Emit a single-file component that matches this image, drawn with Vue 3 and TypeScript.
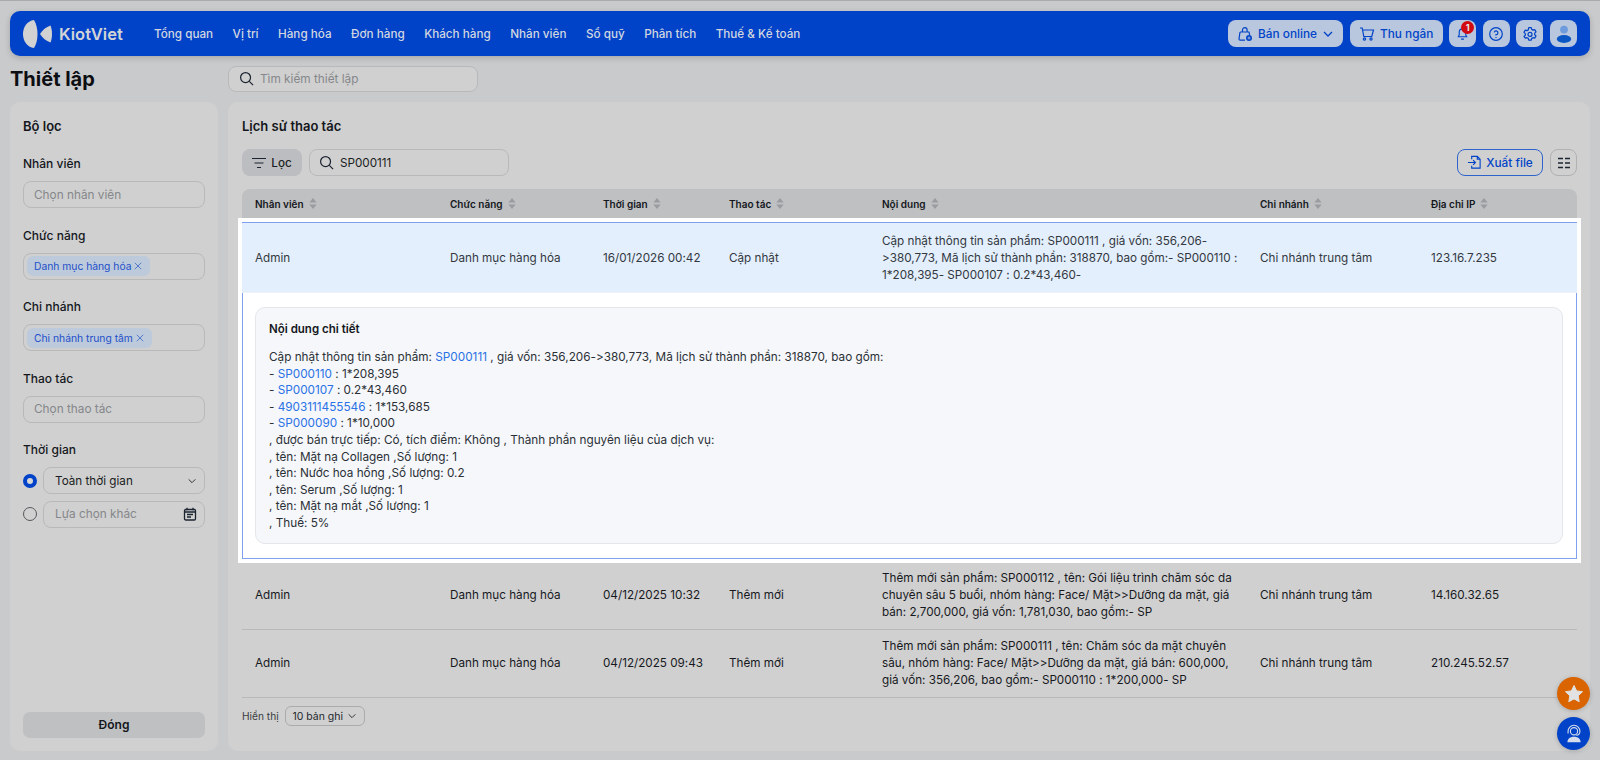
<script setup lang="ts">
const nav: string[] = ['Tổng quan', 'Vị trí', 'Hàng hóa', 'Đơn hàng', 'Khách hàng', 'Nhân viên', 'Sổ quỹ', 'Phân tích', 'Thuế & Kế toán']
const cols: string[] = ['Nhân viên', 'Chức năng', 'Thời gian', 'Thao tác', 'Nội dung', 'Chi nhánh', 'Địa chỉ IP']
const others = [
  { time: '04/12/2025 10:32', content: 'Thêm mới sản phẩm: SP000112 , tên: Gói liệu trình chăm sóc da chuyên sâu 5 buổi, nhóm hàng: Face/ Mặt>>Dưỡng da mặt, giá bán: 2,700,000, giá vốn: 1,781,030, bao gồm:- SP', ip: '14.160.32.65' },
  { time: '04/12/2025 09:43', content: 'Thêm mới sản phẩm: SP000111 , tên: Chăm sóc da mặt chuyên sâu, nhóm hàng: Face/ Mặt>>Dưỡng da mặt, giá bán: 600,000, giá vốn: 356,206, bao gồm:- SP000110 : 1*200,000- SP', ip: '210.245.52.57' },
]
const parts = [
  { code: 'SP000110', value: ' : 1*208,395' },
  { code: 'SP000107', value: ' : 0.2*43,460' },
  { code: '4903111455546', value: ' : 1*153,685' },
  { code: 'SP000090', value: ' : 1*10,000' },
]
const tail: string[] = [
  ', được bán trực tiếp: Có, tích điểm: Không , Thành phần nguyên liệu của dịch vụ:',
  ', tên: Mặt nạ Collagen ,Số lượng: 1',
  ', tên: Nước hoa hồng ,Số lượng: 0.2',
  ', tên: Serum ,Số lượng: 1',
  ', tên: Mặt nạ mắt ,Số lượng: 1',
  ', Thuế: 5%',
]
</script>

<template>
  <div class="page">
    <header class="topbar">
      <div class="brand">
        <svg class="logo" viewBox="0 0 30 28" width="30" height="28">
          <path d="M11 0C4 1 0 7 0 14s4 13 11 14c2.500-4 3.500-9 3.500-14S13.500 4 11 0z" fill="#d2d2d2" />
          <path d="M27.500 5.500C23 7 19.500 10 17 14c2.500 4 6 7 10.500 8.500 1-2.500 1.500-5.500 1.500-8.500s-.5-6-1.500-8.500z" fill="#d2d2d2" />
        </svg>
        <span class="brand-name">KiotViet</span>
      </div>
      <nav class="nav">
        <span v-for="n in nav" :key="n">{{ n }}</span>
      </nav>
      <div class="actions">
        <button class="act wide-a">
          <svg viewBox="0 0 16 16" width="16" height="16" fill="none" stroke="#0043c8" stroke-width="1.200">
            <path d="M3 6h9l.6 3M3 6 2 13c0 .8.500 1.200 1.200 1.200H8M5.500 6V4a2.300 2.300 0 0 1 4.600 0v2" />
            <circle cx="12" cy="12" r="3" fill="#0043c8" stroke="none" />
            <path d="M10.500 12h3M12 10.500v3" stroke="#b8c7dd" stroke-width=".8" />
          </svg>
          Bán online
          <svg viewBox="0 0 12 12" width="12" height="12" fill="none" stroke="#0043c8" stroke-width="1.300"><path d="m2 4 4 4 4-4" /></svg>
        </button>
        <button class="act wide-b">
          <svg viewBox="0 0 16 16" width="16" height="16" fill="none" stroke="#0043c8" stroke-width="1.200">
            <path d="M1 2h2.200l1.600 8.500h8L14.500 4H3.600" />
            <circle cx="5.500" cy="13" r="1.100" />
            <circle cx="12" cy="13" r="1.100" />
          </svg>
          Thu ngân
        </button>
        <button class="act square bell">
          <svg viewBox="0 0 16 16" width="15" height="15" fill="none" stroke="#0043c8" stroke-width="1.200">
            <path d="M3.500 11.500h9l-1-2V6.500a3.500 3.500 0 0 0-7 0v3zM6.500 14h3" />
          </svg>
          <span class="badge">1</span>
        </button>
        <button class="act square">
          <svg viewBox="0 0 16 16" width="16" height="16" fill="none" stroke="#0043c8" stroke-width="1.200">
            <circle cx="8" cy="8" r="6.300" />
            <path d="M6.200 6.300A1.900 1.900 0 1 1 8 8.700v.9M8 11.100v.8" />
          </svg>
        </button>
        <button class="act square">
          <svg viewBox="0 0 16 16" width="16" height="16" fill="none" stroke="#0043c8" stroke-width="1.200">
            <path d="M6.700 1.700h2.600l.4 1.700 1.300.7 1.700-.5 1.300 2.300-1.300 1.200v1.600l1.300 1.200-1.300 2.300-1.700-.5-1.300.7-.4 1.700H6.700l-.4-1.700-1.300-.7-1.700.5L2 10.400l1.300-1.200V7.600L2 6.400l1.300-2.300 1.700.5 1.300-.7z" stroke-linejoin="round" />
            <circle cx="8" cy="8.400" r="2" />
          </svg>
        </button>
        <button class="act square">
          <svg viewBox="0 0 18 18" width="20" height="20">
            <circle cx="9" cy="5" r="3.500" fill="#6d9bdc" />
            <ellipse cx="9" cy="13.500" rx="6.500" ry="3.500" fill="#0a56c4" />
          </svg>
        </button>
      </div>
    </header>

    <div class="title-row">
      <h1>Thiết lập</h1>
      <div class="field search-top">
        <svg class="mag" viewBox="0 0 16 16" width="15" height="15" fill="none" stroke="#1b2430" stroke-width="1.300"><circle cx="7" cy="7" r="5.300" /><path d="m11 11 4 4" /></svg>
        <span class="ph">Tìm kiếm thiết lập</span>
      </div>
    </div>

    <div class="body">
      <aside class="side">
        <h2>Bộ lọc</h2>
        <div class="group">
          <label>Nhân viên</label>
          <div class="field pad"><span class="ph">Chọn nhân viên</span></div>
        </div>
        <div class="group">
          <label>Chức năng</label>
          <div class="field tags">
            <span class="tag">Danh mục hàng hóa <svg viewBox="0 0 10 10" width="8" height="8" fill="none" stroke="#3a64c8" stroke-width="1"><path d="m1 1 8 8M9 1 1 9" /></svg></span>
          </div>
        </div>
        <div class="group">
          <label>Chi nhánh</label>
          <div class="field tags">
            <span class="tag">Chi nhánh trung tâm <svg viewBox="0 0 10 10" width="8" height="8" fill="none" stroke="#3a64c8" stroke-width="1"><path d="m1 1 8 8M9 1 1 9" /></svg></span>
          </div>
        </div>
        <div class="group">
          <label>Thao tác</label>
          <div class="field pad"><span class="ph">Chọn thao tác</span></div>
        </div>
        <div class="group last">
          <label>Thời gian</label>
          <div class="radio-row">
            <span class="radio on"></span>
            <div class="field pad2 between">
              <span class="val">Toàn thời gian</span>
              <svg viewBox="0 0 12 12" width="10" height="10" fill="none" stroke="#333" stroke-width="1.200"><path d="m2 4 4 4 4-4" /></svg>
            </div>
          </div>
          <div class="radio-row">
            <span class="radio"></span>
            <div class="field pad2 between">
              <span class="ph">Lựa chọn khác</span>
              <svg viewBox="0 0 14 14" width="14" height="14" fill="none" stroke="#1b2430" stroke-width="1.300">
                <rect x="1.500" y="2.500" width="11" height="10.500" rx="1.200" />
                <path d="M4 .8v2.500M10 .8v2.500M1.500 5h11M4 7.500h6M4 10h4" />
              </svg>
            </div>
          </div>
        </div>
        <button class="close">Đóng</button>
      </aside>

      <main class="main">
        <h2>Lịch sử thao tác</h2>
        <div class="toolbar">
          <button class="filter">
            <svg viewBox="0 0 14 14" width="14" height="14" fill="none" stroke="#1b2430" stroke-width="1.200"><path d="M0 2.500h14M2.500 7h9M5 11.500h4" /></svg>
            Lọc
          </button>
          <div class="field search-main">
            <svg class="mag" viewBox="0 0 16 16" width="15" height="15" fill="none" stroke="#1b2430" stroke-width="1.300"><circle cx="7" cy="7" r="5.300" /><path d="m11 11 4 4" /></svg>
            <span class="val">SP000111</span>
          </div>
          <div class="spacer"></div>
          <button class="export">
            <svg viewBox="0 0 16 16" width="15" height="15" fill="none" stroke="#0043c8" stroke-width="1.200">
              <path d="M5 4.500V1.500h6l3 3V14H5v-2.500M11 1.500v3h3M1 8h8M6.500 5.500 9 8l-2.500 2.500" />
            </svg>
            Xuất file
          </button>
          <button class="grid-btn">
            <svg viewBox="0 0 14 14" width="14" height="14" fill="none" stroke="#1b2430" stroke-width="1.300"><path d="M1 2.500h5M8 2.500h5M1 7h5M8 7h5M1 11.500h5M8 11.500h5" /></svg>
          </button>
        </div>

        <div class="thead grid">
          <div v-for="c in cols" :key="c" class="th">
            {{ c }}
            <svg viewBox="0 0 8 12" width="8" height="11" fill="#9a9c9f"><path d="M4 0 8 5H0zM4 12 0 7h8z" /></svg>
          </div>
        </div>

        <section class="focus">
          <div class="grid row-blue">
            <div>Admin</div>
            <div>Danh mục hàng hóa</div>
            <div class="nowrap">16/01/2026 00:42</div>
            <div>Cập nhật</div>
            <div class="content">Cập nhật thông tin sản phẩm: SP000111 , giá vốn: 356,206-&gt;380,773, Mã lịch sử thành phần: 318870, bao gồm:- SP000110 : 1*208,395- SP000107 : 0.2*43,460-</div>
            <div>Chi nhánh trung tâm</div>
            <div>123.16.7.235</div>
          </div>
          <div class="detail-wrap">
            <div class="detail">
              <h3>Nội dung chi tiết</h3>
              <p>Cập nhật thông tin sản phẩm: <a>SP000111</a> , giá vốn: 356,206-&gt;380,773, Mã lịch sử thành phần: 318870, bao gồm:</p>
              <p v-for="p in parts" :key="p.code">- <a>{{ p.code }}</a>{{ p.value }}</p>
              <p v-for="t in tail" :key="t">{{ t }}</p>
            </div>
          </div>
        </section>

        <div v-for="o in others" :key="o.time" class="grid row">
          <div>Admin</div>
          <div>Danh mục hàng hóa</div>
          <div class="nowrap">{{ o.time }}</div>
          <div>Thêm mới</div>
          <div class="content">{{ o.content }}</div>
          <div>Chi nhánh trung tâm</div>
          <div>{{ o.ip }}</div>
        </div>

        <div class="footer">
          <span class="show">Hiển thị</span>
          <div class="page-size">
            10 bản ghi
            <svg viewBox="0 0 12 12" width="10" height="10" fill="none" stroke="#333" stroke-width="1.200"><path d="m2 4 4 4 4-4" /></svg>
          </div>
        </div>
      </main>
    </div>

    <div class="fab orange">
      <svg viewBox="0 0 20 20" width="20" height="20" fill="#e2e2e2"><path d="m10 1.500 2.600 5.400 5.900.8-4.300 4.100 1 5.900L10 14.900l-5.200 2.800 1-5.900L1.500 7.700l5.900-.8z" stroke="#e2e2e2" stroke-linejoin="round" /></svg>
    </div>
    <div class="fab blue">
      <svg viewBox="0 0 20 20" width="22" height="22" fill="none" stroke="#d6dcec" stroke-width="1">
        <circle cx="10" cy="7.500" r="3.300" />
        <path d="M4.600 9.500V7.500a5.400 5.400 0 0 1 10.800 0c0 2-1.500 3.500-3.400 3.700" />
        <path d="M4 17.500c0-3 2.300-5 6-5s6 2 6 5z" fill="#d6dcec" stroke="none" />
      </svg>
    </div>
  </div>
</template>

<style>
html, body { margin: 0; background: #c9cacc; }
</style>

<style scoped>
* { box-sizing: border-box; }
.page {
  position: relative;
  width: 1600px;
  height: 760px;
  overflow: hidden;
  border-top: 1px solid #a9aaab;
  padding: 10px 10px 9.500px;
  background: #c9cacc;
  display: flex;
  flex-direction: column;
  font-family: Inter, "Noto Sans", sans-serif;
  font-size: 11.700px;
  font-feature-settings: "calt" 0;
  color: #1a1d22;
}
button { font-family: inherit; font-feature-settings: inherit; border: 0; padding: 0; }

.topbar {
  height: 45px;
  flex: none;
  background: #0043c8;
  border-radius: 10px;
  display: flex;
  align-items: center;
  padding: 0 13px 0 13px;
  box-shadow: 0 2px 6px rgba(0, 0, 0, .18);
}
.brand { display: flex; align-items: center; gap: 6px; width: 131px; flex: none; }
.logo { flex: none; }
.brand-name { color: #d3d4d6; font-size: 16.500px; font-weight: 600; }
.nav { display: flex; gap: 19.500px; color: #d3d7e0; font-size: 11.700px; font-weight: 500; }
.actions { margin-left: auto; display: flex; gap: 6.600px; }
.act {
  height: 27px;
  border-radius: 8px;
  background: #b8c7dd;
  color: #0043c8;
  font-size: 11.800px;
  font-weight: 500;
  display: flex;
  align-items: center;
  justify-content: center;
  gap: 5px;
}
.wide-a { width: 115px; }
.wide-b { width: 93px; }
.square { width: 27px; position: relative; }
.badge {
  position: absolute;
  top: 1px;
  right: 2px;
  width: 13px;
  height: 13px;
  border-radius: 50%;
  background: #d10a12;
  color: #e8e8e8;
  font-size: 9px;
  font-weight: 700;
  line-height: 13px;
  text-align: center;
}

.title-row { display: flex; align-items: center; height: 27px; margin: 9px 0 10px; flex: none; }
h1 { margin: 0; width: 218px; font-size: 20px; font-weight: 700; color: #0c0e12; flex: none; }
.field {
  border: 1px solid #b8b9bb;
  border-radius: 8px;
  background: #d0d0d0;
  height: 27px;
  display: flex;
  align-items: center;
}
.search-top { width: 250px; height: 26px; padding-left: 10px; gap: 6px; }
.ph { color: #85878b; font-size: 11.800px; }
.val { color: #1a1d22; font-size: 11.700px; }

.body { flex: 1; display: flex; gap: 10px; min-height: 0; }
.side, .main { background: #d0d0d0; border-radius: 10px; }
.side { width: 208px; flex: none; padding: 16px 13px 13px; display: flex; flex-direction: column; }
h2 { margin: 0; font-size: 13px; font-weight: 600; color: #14171c; line-height: 17px; }
.side h2 { margin-bottom: 21px; }
.group { margin-bottom: 19.500px; }
.group.last { margin-bottom: 0; }
label { display: block; font-size: 12px; font-weight: 500; line-height: 16px; margin-bottom: 9px; color: #14171c; }
.pad { padding-left: 10px; }
.pad2 { padding: 0 7px 0 11px; flex: 1; min-width: 0; }
.between { justify-content: space-between; }
.tags { padding-left: 3px; }
.tag {
  display: inline-flex;
  align-items: center;
  gap: 3px;
  height: 20px;
  padding: 0 8px 0 7px;
  border-radius: 6px;
  background: #bdcadb;
  color: #1f50c9;
  font-size: 10.300px;
}
.radio-row { display: flex; align-items: center; gap: 6px; margin-bottom: 6.500px; }
.radio {
  width: 14px;
  height: 14px;
  flex: none;
  border-radius: 50%;
  border: 1px solid #55585d;
}
.radio.on { border: 4px solid #0043c8; background: #d8d8d8; }
.close {
  margin-top: auto;
  height: 26px;
  border-radius: 7px;
  background: #bfc0c2;
  font-size: 12px;
  font-weight: 600;
  color: #14171c;
}

.main { flex: 1; min-width: 0; padding: 16px 13px 0 14px; display: flex; flex-direction: column; }
.toolbar { display: flex; align-items: center; gap: 7px; margin-top: 14px; margin-bottom: 13px; height: 27px; flex: none; }
.filter {
  width: 60px;
  height: 27px;
  border-radius: 8px;
  background: #bcbdc0;
  display: flex;
  align-items: center;
  justify-content: center;
  gap: 5px;
  font-size: 11.700px;
  font-weight: 500;
  color: #1a1d22;
}
.search-main { width: 200px; padding-left: 9px; gap: 6px; }
.spacer { flex: 1; }
.export {
  width: 86px;
  height: 27px;
  border-radius: 8px;
  background: transparent;
  border: 1px solid #2f63cc;
  color: #0043c8;
  font-size: 11.800px;
  font-weight: 500;
  display: flex;
  align-items: center;
  justify-content: center;
  gap: 4px;
}
.grid-btn {
  width: 27px;
  height: 27px;
  border-radius: 8px;
  background: transparent;
  border: 1px solid #b0b1b3;
  display: flex;
  align-items: center;
  justify-content: center;
}

.grid { display: grid; grid-template-columns: 195px 153px 126px 153px 378px 171px 159px; }
.grid > div { padding: 0 13px; }
.grid > .content { padding-right: 8px; }
.nowrap { white-space: nowrap; }
.thead {
  height: 29px;
  flex: none;
  background: #bfc0c2;
  border-radius: 8px 8px 0 0;
  margin-bottom: 4px;
  align-items: center;
}
.th { display: flex; align-items: center; gap: 5px; font-size: 10px; font-weight: 600; color: #14171c; }

.focus {
  flex: none;
  height: 337px;
  border: 1px solid #7f9fef;
  box-shadow: 0 0 0 4px #fff;
  background: #fff;
  margin-bottom: 3px;
}
.row-blue {
  height: 70px;
  margin: 0 -1px;
  padding-top: 2px;
  background: #e3effc;
  border-bottom: 1px solid #eef1f5;
  align-items: center;
  line-height: 17px;
  color: #33383f;
}
.detail-wrap { padding: 14px 13px 0 12px; }
.detail {
  height: 237px;
  background: #f5f7fa;
  border: 1px solid #e4e6ea;
  border-radius: 10px;
  padding: 13px 13px 0;
  font-size: 11.750px;
  color: #2b3036;
  line-height: 16.600px;
}
h3 { margin: 0 0 12px; font-size: 11.500px; font-weight: 600; color: #14171c; line-height: 16px; }
p { margin: 0; }
a { color: #2a72e6; }

.row {
  height: 68px;
  flex: none;
  align-items: center;
  line-height: 17px;
  border-bottom: 1px solid #b8b9bb;
  color: #17191e;
}
.footer { display: flex; align-items: center; gap: 6px; margin-top: 8px; }
.show { font-size: 10.200px; color: #3a3d42; }
.page-size {
  width: 80px;
  height: 20px;
  border: 1px solid #aaabad;
  border-radius: 6px;
  font-size: 10.500px;
  display: flex;
  align-items: center;
  justify-content: center;
  gap: 4px;
  color: #25282d;
}

.fab {
  position: absolute;
  left: 1557px;
  width: 33px;
  height: 33px;
  border-radius: 50%;
  display: flex;
  align-items: center;
  justify-content: center;
  box-shadow: 0 1px 5px rgba(0, 0, 0, .2);
}
.orange { top: 676px; background: #d96400; }
.blue { top: 716px; background: #0043c8; }
</style>
